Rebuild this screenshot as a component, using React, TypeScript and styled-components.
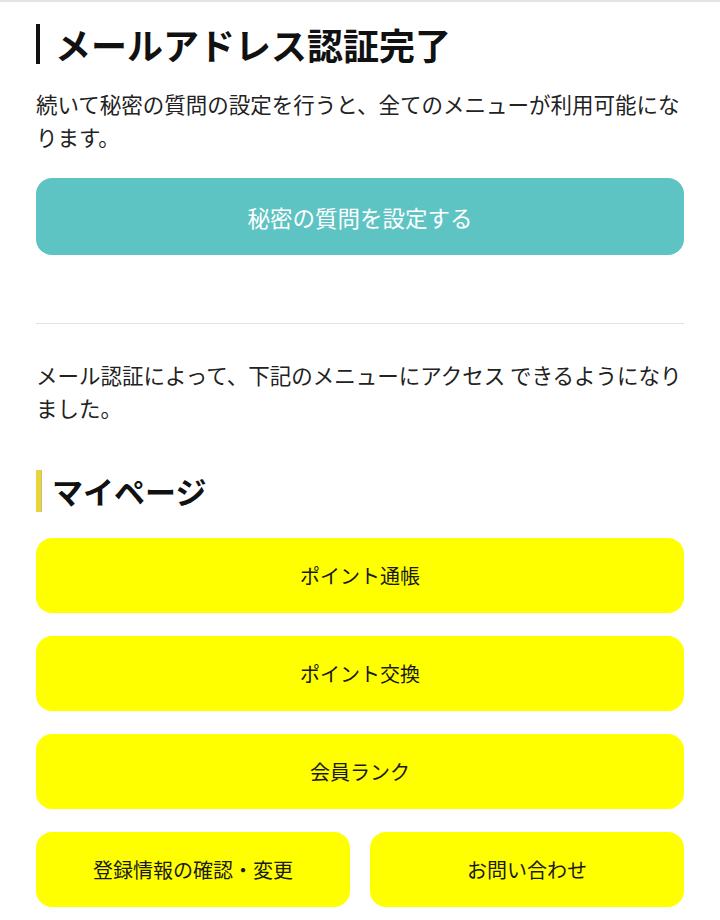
import React from "react";
import styled, { createGlobalStyle } from "styled-components";

const GlobalStyle = createGlobalStyle`
  html, body {
    margin: 0;
    padding: 0;
    background: #ffffff;
  }
  body {
    font-family: "Noto Sans CJK JP", "Noto Sans", sans-serif;
    color: #222222;
  }
  * { box-sizing: border-box; }
`;

const Page = styled.div`
  border-top: 2px solid #e3e3e8;
  padding: 0 36px 20px;
  display: flex;
  flex-direction: column;
`;

const Title = styled.h1`
  margin: 22px 0 0;
  border-left: 4px solid #111111;
  padding-left: 15px;
  font-size: 36px;
  line-height: 40px;
  font-weight: 700;
  color: #111111;
  letter-spacing: 0;
`;

const Text = styled.p<{ $top: number }>`
  margin: ${(p) => p.$top}px 0 0;
  font-size: 21.5px;
  line-height: 32.5px;
  color: #222222;
`;

const TealButton = styled.button`
  margin-top: 25px;
  height: 77px;
  width: 100%;
  border: none;
  border-radius: 16px;
  background: #5dc3c3;
  color: #ffffff;
  font-family: inherit;
  font-size: 22.5px;
  display: flex;
  align-items: center;
  justify-content: center;
`;

const Divider = styled.hr`
  margin: 68px 0 0;
  border: none;
  border-top: 1px solid #e2e2e2;
  height: 0;
`;

const SectionTitle = styled.h2`
  margin: 46px 0 0;
  border-left: 5px solid #e8d53c;
  box-shadow: inset 1px 0 0 #c9bf7a;
  padding-left: 11px;
  font-size: 31px;
  line-height: 42px;
  font-weight: 700;
  color: #111111;
`;

const MenuGrid = styled.div`
  margin-top: 26px;
  display: grid;
  grid-template-columns: 1fr 1fr;
  column-gap: 20px;
  row-gap: 23px;
`;

const MenuButton = styled.button<{ $wide?: boolean }>`
  grid-column: ${(p) => (p.$wide ? "1 / span 2" : "auto")};
  height: 75px;
  border: none;
  border-radius: 16px;
  background: #ffff00;
  color: #1a1a1a;
  font-family: inherit;
  font-size: 20px;
  display: flex;
  align-items: center;
  justify-content: center;
`;

const menus: { label: string; wide: boolean }[] = [
  { label: "ポイント通帳", wide: true },
  { label: "ポイント交換", wide: true },
  { label: "会員ランク", wide: true },
  { label: "登録情報の確認・変更", wide: false },
  { label: "お問い合わせ", wide: false },
];

export default function App() {
  return (
    <>
      <GlobalStyle />
      <Page>
        <Title>メールアドレス認証完了</Title>
        <Text $top={24}>
          続いて秘密の質問の設定を行うと、全てのメニューが利用可能になります。
        </Text>
        <TealButton>秘密の質問を設定する</TealButton>
        <Divider />
        <Text $top={35}>
          メール認証によって、下記のメニューにアクセス できるようになりました。
        </Text>
        <SectionTitle>マイページ</SectionTitle>
        <MenuGrid>
          {menus.map((m) => (
            <MenuButton key={m.label} $wide={m.wide}>
              {m.label}
            </MenuButton>
          ))}
        </MenuGrid>
      </Page>
    </>
  );
}
